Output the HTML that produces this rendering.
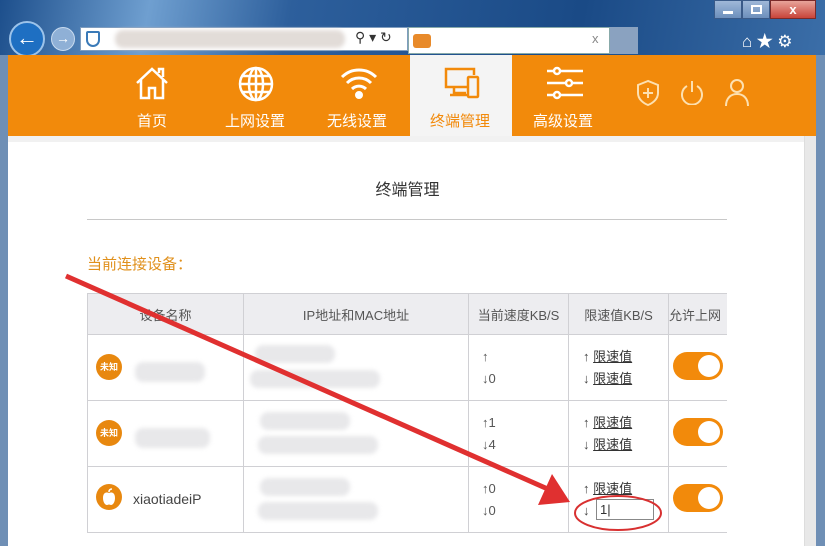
<!DOCTYPE html>
<html><head><meta charset="utf-8">
<style>
*{margin:0;padding:0;box-sizing:border-box}
body{width:825px;height:546px;overflow:hidden;position:relative;background:#fff;font-family:"Liberation Sans","Noto Sans CJK SC",sans-serif}
.abs{position:absolute}
.top{left:0;top:0;width:825px;height:56px;background:linear-gradient(100deg,#1d4f8c 0%,#6f9fd0 18%,#2d5f9c 35%,#1a4a86 70%,#3b6ea8 100%)}
.nav{left:8px;top:55px;width:808px;height:81px;background:#f28a0b}
.item{position:absolute;top:0;height:81px;width:100px;color:#fff;text-align:center;font-size:15px}
.item svg{position:absolute;left:32px;top:10px}
.item span{position:absolute;left:0;right:0;top:55px}
.grey{background:#ededf0;border-bottom:1px solid #ccc}
td,th{border:1px solid #d0d0d4;font-weight:normal;font-size:13px;color:#555}
.blur{background:#e8e8ea;border-radius:8px;filter:blur(2px);position:absolute}
.tog{position:absolute;width:50px;height:28px;border-radius:14px;background:#f28a0b}
.tog:after{content:"";position:absolute;right:3px;top:3px;width:22px;height:22px;border-radius:11px;background:#fff}
.badge{position:absolute;width:26px;height:26px;border-radius:13px;background:#e8880f;color:#fff;font-size:9px;font-weight:bold;text-align:center;line-height:26px}
.lim{position:absolute;font-size:13px;color:#444}
.lim u{color:#333}
</style></head><body>
<div class="abs top"></div>
<div class="abs" style="left:714px;top:0;width:28px;height:19px;background:linear-gradient(#9fb8d8,#6c8fbc);border:1px solid #3a5a88"><div class="abs" style="left:8px;top:10px;width:10px;height:3px;background:#fff"></div></div>
<div class="abs" style="left:742px;top:0;width:28px;height:19px;background:linear-gradient(#9fb8d8,#6c8fbc);border:1px solid #3a5a88"><div class="abs" style="left:8px;top:4px;width:11px;height:9px;border:2px solid #fff"></div></div>
<div class="abs" style="left:770px;top:0;width:46px;height:19px;background:linear-gradient(#e8a49a,#c8443a);border:1px solid #7a2a2a;color:#fff;font-size:13px;font-weight:bold;text-align:center;line-height:17px">x</div>
<div class="abs" style="left:9px;top:21px;width:36px;height:36px;border-radius:18px;background:#1e6fc2;border:2px solid #9cc3ea;color:#fff;font-size:22px;font-weight:bold;text-align:center;line-height:30px">←</div>
<div class="abs" style="left:51px;top:27px;width:24px;height:24px;border-radius:12px;background:#8fb0d6;border:1px solid #c9dbef;color:#fff;font-size:14px;text-align:center;line-height:21px">→</div>
<div class="abs" style="left:80px;top:27px;width:328px;height:24px;background:#fff;border:1px solid #7f9dbf"></div>
<div class="abs" style="left:86px;top:31px;width:14px;height:16px;border:2px solid #3a7ab8;border-radius:2px 2px 7px 7px"></div>
<div class="blur" style="left:115px;top:30px;width:230px;height:18px;background:#e2dcd8"></div>
<div class="abs" style="left:355px;top:29px;font-size:14px;color:#333">⚲ ▾ ↻</div>
<div class="abs" style="left:408px;top:27px;width:202px;height:27px;background:#fff;border:1px solid #8aa"></div>
<div class="abs" style="left:413px;top:34px;width:18px;height:14px;background:#e88a2a;border-radius:3px"></div>
<div class="abs" style="left:592px;top:31px;font-size:13px;color:#888">x</div>
<div class="abs" style="left:610px;top:27px;width:28px;height:27px;background:#8aa2c0"></div>
<div class="abs" style="left:742px;top:27px;font-size:17px;color:#fff;letter-spacing:4px">⌂★⚙</div>
<div class="abs" style="left:816px;top:55px;width:9px;height:491px;background:#6f8fb5"></div>
<div class="abs" style="left:0;top:55px;width:8px;height:491px;background:#6f8fb5"></div>
<div class="abs" style="left:804px;top:136px;width:12px;height:410px;background:#e8e8e8;border-left:1px solid #ddd"></div>
<div class="abs nav">
<div class="abs" style="left:402px;top:0;width:102px;height:81px;background:#f4f4f4"></div>
<div class="item" style="left:94px"><svg width="36" height="36" viewBox="0 0 36 36" fill="none" stroke="#fff" stroke-width="2.5"><path d="M3 18L18 4l15 14M7 15v18h8V23h6v10h8V15M25 8V4h4v8"/></svg><span>首页</span></div>
<div class="item" style="left:197px"><svg width="38" height="38" viewBox="0 0 38 38" fill="none" stroke="#fff" stroke-width="2.5"><circle cx="19" cy="19" r="16"/><ellipse cx="19" cy="19" rx="7" ry="16"/><path d="M3 19h32M19 3v32M6 11h26M6 27h26"/></svg><span>上网设置</span></div>
<div class="item" style="left:299px"><svg width="40" height="36" viewBox="0 0 40 36" fill="none" stroke="#fff" stroke-width="3"><path d="M3 12a24 24 0 0 1 34 0M8 18a17 17 0 0 1 24 0M13 24a10 10 0 0 1 14 0"/><circle cx="20" cy="30" r="2.5" fill="#fff"/></svg><span>无线设置</span></div>
<div class="item" style="left:402px;color:#f28a0b"><svg width="40" height="36" viewBox="0 0 40 36" fill="none" stroke="#f28a0b" stroke-width="2.5"><path d="M26 22H4V4h28v6M12 22v6h12M8 30h18"/><rect x="26" y="12" width="10" height="20" rx="1"/></svg><span>终端管理</span></div>
<div class="item" style="left:505px"><svg width="38" height="36" viewBox="0 0 38 36" fill="none" stroke="#fff" stroke-width="2.5"><path d="M2 6h36M2 18h36M2 30h36"/><circle cx="12" cy="6" r="3" fill="#f28a0b"/><circle cx="24" cy="18" r="3" fill="#f28a0b"/><circle cx="12" cy="30" r="3" fill="#f28a0b"/></svg><span>高级设置</span></div>
<svg class="abs" style="left:628px;top:24px" width="24" height="28" viewBox="0 0 24 28" fill="none" stroke="#fde0b0" stroke-width="2"><path d="M12 2L2 6v8c0 6 5 10 10 12 5-2 10-6 10-12V6z"/><path d="M12 9v10M7 14h10"/></svg>
<svg class="abs" style="left:672px;top:24px" width="24" height="26" viewBox="0 0 24 26" fill="none" stroke="#fde0b0" stroke-width="2"><path d="M7 7a10 10 0 1 0 10 0M12 2v11"/></svg>
<svg class="abs" style="left:716px;top:22px" width="26" height="30" viewBox="0 0 26 30" fill="none" stroke="#fde0b0" stroke-width="2"><circle cx="13" cy="9" r="6"/><path d="M2 29c0-8 5-12 11-12s11 4 11 12"/></svg>
</div>
<div class="abs" style="left:8px;top:136px;width:796px;height:6px;background:#f1f1f1"></div>
<div class="abs" style="left:0;top:176px;width:825px;text-align:center;font-size:16px;color:#333;padding-right:10px">终端管理</div>
<div class="abs" style="left:87px;top:219px;width:640px;height:1px;background:#c8c8c8"></div>
<div class="abs" style="left:87px;top:253px;font-size:15px;color:#e0901c">当前连接设备：</div>
<table class="abs" style="left:87px;top:293px;border-collapse:collapse;width:650px">
<tr class="grey" style="height:41px"><th style="width:156px">设备名称</th><th style="width:225px">IP地址和MAC地址</th><th style="width:100px">当前速度KB/S</th><th style="width:100px">限速值KB/S</th><th style="text-align:left;white-space:nowrap">允许上网</th></tr>
<tr style="height:66px"><td></td><td></td><td></td><td></td><td></td></tr>
<tr style="height:66px"><td></td><td></td><td></td><td></td><td></td></tr>
<tr style="height:66px"><td></td><td></td><td></td><td></td><td></td></tr>
</table>
<div class="abs" style="left:727px;top:290px;width:77px;height:256px;background:#fff"></div>
<div class="badge" style="left:96px;top:354px">未知</div>
<div class="badge" style="left:96px;top:420px">未知</div>
<div class="badge" style="left:96px;top:484px"><svg width="26" height="26" viewBox="0 0 26 26"><path d="M13 9c-2-1-6-1-6 5 0 4 2 7 4 7 1 0 1-.5 2-.5s1 .5 2 .5c2 0 4-3 4-7 0-6-4-6-6-5z" fill="#fff"/><path d="M13 8c0-2 1-3 3-3" stroke="#fff" stroke-width="1.5" fill="none"/></svg></div>
<div class="abs" style="left:133px;top:491px;font-size:14px;color:#444">xiaotiadeiP</div>
<div class="blur" style="left:135px;top:362px;width:70px;height:20px"></div>
<div class="blur" style="left:135px;top:428px;width:75px;height:20px"></div>
<div class="blur" style="left:255px;top:345px;width:80px;height:18px"></div>
<div class="blur" style="left:250px;top:370px;width:130px;height:18px"></div>
<div class="blur" style="left:260px;top:412px;width:90px;height:18px"></div>
<div class="blur" style="left:258px;top:436px;width:120px;height:18px"></div>
<div class="blur" style="left:260px;top:478px;width:90px;height:18px"></div>
<div class="blur" style="left:258px;top:502px;width:120px;height:18px"></div>
<div class="abs" style="left:482px;top:346px;font-size:13px;color:#555;line-height:22px">↑<br>↓0</div>
<div class="abs" style="left:482px;top:412px;font-size:13px;color:#555;line-height:22px">↑1<br>↓4</div>
<div class="abs" style="left:482px;top:478px;font-size:13px;color:#555;line-height:22px">↑0<br>↓0</div>
<div class="lim" style="left:583px;top:346px;line-height:22px">↑ <u>限速值</u><br>↓ <u>限速值</u></div>
<div class="lim" style="left:583px;top:412px;line-height:22px">↑ <u>限速值</u><br>↓ <u>限速值</u></div>
<div class="lim" style="left:583px;top:478px">↑ <u>限速值</u></div>
<div class="lim" style="left:583px;top:503px">↓</div>
<div class="abs" style="left:596px;top:499px;width:58px;height:21px;border:1px solid #888;font-size:13px;padding-left:3px;line-height:19px;color:#333">1|</div>
<div class="tog" style="left:673px;top:352px"></div>
<div class="tog" style="left:673px;top:418px"></div>
<div class="tog" style="left:673px;top:484px"></div>
<svg class="abs" style="left:0;top:0" width="825" height="546">
<line x1="66" y1="276" x2="550" y2="490" stroke="#e03030" stroke-width="5"/>
<polygon points="570,502 538,505 552,474" fill="#e03030"/>
<ellipse cx="618" cy="513" rx="43" ry="17" fill="none" stroke="#d83030" stroke-width="2"/>
</svg>
</body></html>
